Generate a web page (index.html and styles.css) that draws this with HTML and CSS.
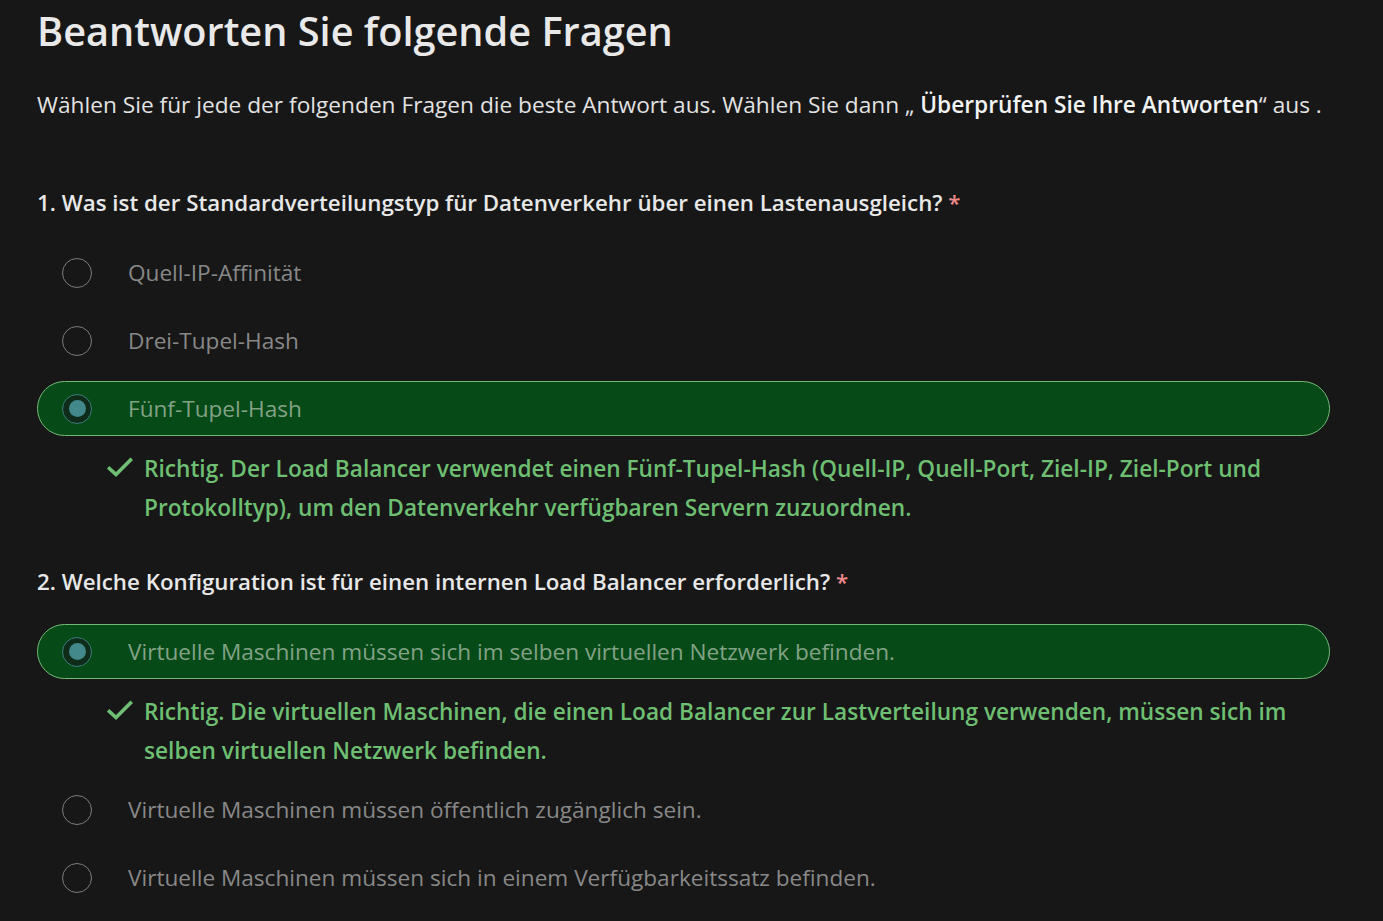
FILE: index.html
```html
<!DOCTYPE html>
<html lang="de">
<head>
<meta charset="utf-8">
<title>Beantworten Sie folgende Fragen</title>
<link rel="stylesheet" href="styles.css">
</head>
<body>
<main class="page">
  <h1 class="title">Beantworten Sie folgende Fragen</h1>
  <p class="intro">Wählen Sie für jede der folgenden Fragen die beste Antwort aus. Wählen Sie dann „ <strong>Überprüfen Sie Ihre Antworten</strong>“ aus .</p>

  <section class="question">
    <h2 class="q-title">1. Was ist der Standardverteilungstyp für Datenverkehr über einen Lastenausgleich? <span class="req">*</span></h2>
    <div class="options">
      <div class="option"><span class="radio"></span><span class="opt-text">Quell-IP-Affinität</span></div>
      <div class="option"><span class="radio"></span><span class="opt-text">Drei-Tupel-Hash</span></div>
      <div class="option selected"><span class="radio"><span class="dot"></span></span><span class="opt-text">Fünf-Tupel-Hash</span></div>
      <div class="feedback">
        <svg class="check" viewBox="0 0 26 22" width="26" height="22"><path d="M2.5 11.5 L9 17.5 L23.5 3" fill="none" stroke="currentColor" stroke-width="3.6" stroke-linecap="square"/></svg>
        <p class="fb-text">Richtig. Der Load Balancer verwendet einen Fünf-Tupel-Hash (Quell-IP, Quell-Port, Ziel-IP, Ziel-Port und Protokolltyp), um den Datenverkehr verfügbaren Servern zuzuordnen.</p>
      </div>
    </div>
  </section>

  <section class="question">
    <h2 class="q-title">2. Welche Konfiguration ist für einen internen Load Balancer erforderlich? <span class="req">*</span></h2>
    <div class="options">
      <div class="option selected"><span class="radio"><span class="dot"></span></span><span class="opt-text">Virtuelle Maschinen müssen sich im selben virtuellen Netzwerk befinden.</span></div>
      <div class="feedback">
        <svg class="check" viewBox="0 0 26 22" width="26" height="22"><path d="M2.5 11.5 L9 17.5 L23.5 3" fill="none" stroke="currentColor" stroke-width="3.6" stroke-linecap="square"/></svg>
        <p class="fb-text">Richtig. Die virtuellen Maschinen, die einen Load Balancer zur Lastverteilung verwenden, müssen sich im selben virtuellen Netzwerk befinden.</p>
      </div>
      <div class="option"><span class="radio"></span><span class="opt-text">Virtuelle Maschinen müssen öffentlich zugänglich sein.</span></div>
      <div class="option"><span class="radio"></span><span class="opt-text">Virtuelle Maschinen müssen sich in einem Verfügbarkeitssatz befinden.</span></div>
    </div>
  </section>
</main>
</body>
</html>
```

FILE: styles.css
```css
html, body {
  margin: 0;
  padding: 0;
  background: #171717;
}
body {
  font-family: "Open Sans", "Noto Sans", "Liberation Sans", sans-serif;
  color: #e4e4e4;
  overflow: hidden;
}
.page {
  padding: 5px 53px 0 37px;
}
.title {
  margin: 0;
  font-size: 39.7px;
  line-height: 52px;
  font-weight: 600;
  color: #e9e9e9;
}
.intro {
  margin: 33px 0 0;
  font-size: 22.7px;
  line-height: 30px;
  color: #e2e2e2;
}
.intro strong {
  font-weight: 600;
  color: #f2f2f2;
}
.question {
  margin-top: 68px;
}
.question + .question {
  margin-top: 41px;
}
.q-title {
  margin: 0;
  font-size: 22.3px;
  line-height: 30px;
  font-weight: 600;
  color: #e8e8e8;
}
.req {
  color: #f08a8a;
  font-weight: 600;
}
.options {
  margin-top: 27px;
  display: flex;
  flex-direction: column;
  gap: 13px;
}
.option {
  height: 55px;
  box-sizing: border-box;
  display: flex;
  align-items: center;
  padding-left: 24px;
  border: 1px solid transparent;
  border-radius: 28px;
}
.option.selected {
  background: #064a18;
  border-color: #73b976;
}
.radio {
  width: 30px;
  height: 30px;
  box-sizing: border-box;
  border-radius: 50%;
  border: 1.5px solid #7c7c7c;
  display: flex;
  align-items: center;
  justify-content: center;
  flex: none;
}
.option.selected .radio {
  background: #0f2b1a;
  border: 1.5px solid #3c7e78;
}
.dot {
  width: 17px;
  height: 17px;
  border-radius: 50%;
  background: #43888a;
}
.opt-text {
  margin-left: 36px;
  font-size: 22.6px;
  color: #888888;
}
.option.selected .opt-text {
  color: #82a286;
}
.feedback {
  display: flex;
  align-items: flex-start;
  padding-left: 70px;
  margin: 0 0 -1px;
  color: #6ebf72;
}
.check {
  flex: none;
  margin-top: 8px;
  width: 26px;
  height: 22px;
}
.fb-text {
  margin: 0 0 0 11px;
  font-size: 22.65px;
  line-height: 39px;
  font-weight: 600;
  padding-right: 40px;
}
```
